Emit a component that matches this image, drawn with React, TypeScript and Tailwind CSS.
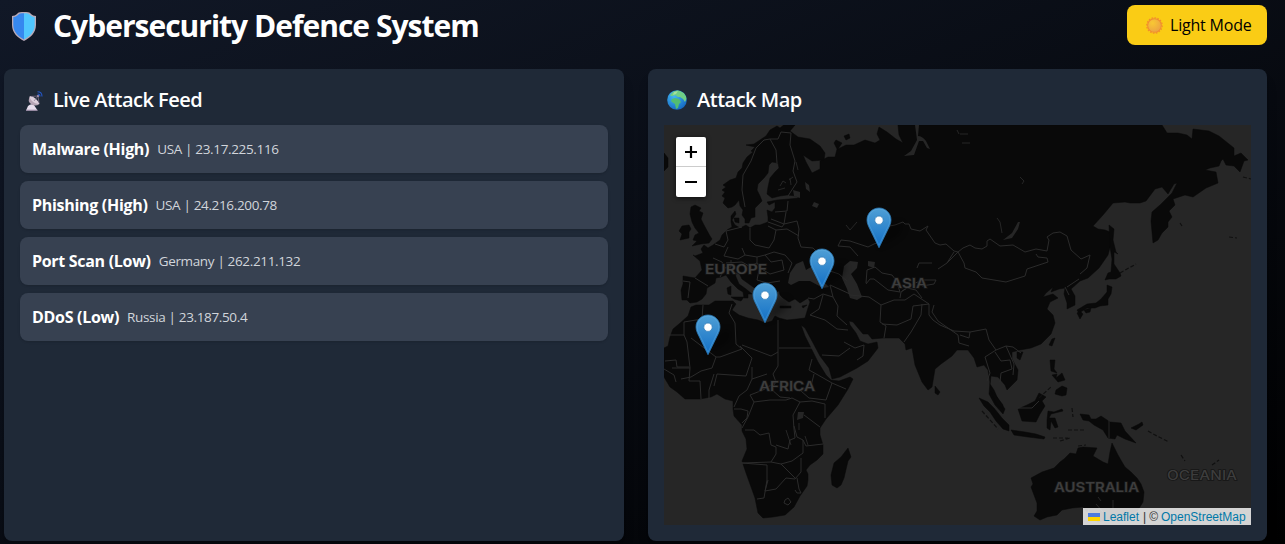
import React from "react";

const attacks = [
  { type: "Malware", level: "High", country: "USA", ip: "23.17.225.116" },
  { type: "Phishing", level: "High", country: "USA", ip: "24.216.200.78" },
  { type: "Port Scan", level: "Low", country: "Germany", ip: "262.211.132" },
  { type: "DDoS", level: "Low", country: "Russia", ip: "23.187.50.4" },
];

const pins = [
  [879, 247],
  [822, 288],
  [765, 322],
  [708, 354],
];

const labels: [string, number, number, number][] = [
  ["EUROPE", 705, 274, 62],
  ["ASIA", 891, 288, 36],
  ["AFRICA", 759, 391, 56],
  ["AUSTRALIA", 1054, 492, 85],
];

function Shield() {
  return (
    <svg className="h-[31px] w-[26px]" viewBox="0 0 26 31">
      <path d="M13 1C10 1 7 1 6 3Q4 5 1 5V14C1 22 7 27 13 30C19 27 25 22 25 14V5Q22 5 20 3C19 1 16 1 13 1Z" fill="#b8aab8" />
      <path d="M13 2.3C10 2.3 8 2.3 7 4Q5 6 2.3 6.3V14C2.3 21 7.5 25.5 13 28.5Z" fill="#3688ef" />
      <path d="M13 2.3C16 2.3 18 2.3 19 4Q21 6 23.7 6.3V14C23.7 21 18.5 25.5 13 28.5Z" fill="#50c7ff" />
    </svg>
  );
}

function Dish() {
  return (
    <svg className="mt-0.5 h-5 w-[18px]" viewBox="0 0 18 20">
      <path d="M1 19.6L3 15Q6 12 9 14L12.5 19.6Z" fill="#e7deed" />
      <path d="M1 18.7H12.5V19.8H1Z" fill="#9b8ba5" />
      <path d="M5 5Q2 10 6 13Q10 16 14.5 13Z" fill="#b5a4b4" />
      <path d="M5 5Q8 5 11 8T14.5 13Q10 13 7 10T5 5Z" fill="#dccfdb" />
      <path d="M5.5 5.5L13 5L14 12M13 5L9 10" fill="none" stroke="#8a7894" strokeWidth=".7" />
      <circle cx="13" cy="5" r="1.1" fill="#a28fae" />
      <path d="M12.5.8Q17 .8 17 5.5M12.5 3Q15 3 15 5.5" fill="none" stroke="#2457c9" strokeWidth="1.1" />
    </svg>
  );
}

function Globe() {
  return (
    <svg className="mt-px h-5 w-5" viewBox="0 0 20 20">
      <defs>
        <radialGradient id="globe" cx=".35" cy=".3" r=".8">
          <stop stopColor="#42b8f4" />
          <stop offset="1" stopColor="#1263bd" />
        </radialGradient>
        <clipPath id="globe-clip"><circle cx="10" cy="10" r="9.8" /></clipPath>
      </defs>
      <circle cx="10" cy="10" r="9.8" fill="url(#globe)" />
      <g clipPath="url(#globe-clip)">
        <path d="M3 5L6 2L11 0L17 3L20 8L18 12L16 9L13 7L11 7L8 5L6 6L4 6Z" fill="#6fce86" />
        <path d="M5 9L8 8L12 9L14 12L12 14L11 18L9 19L8 14L5 12L4 11Z" fill="#52bd72" />
        <path d="M7 2L11 1L9 4L6 5Z" fill="#a5e19a" />
      </g>
    </svg>
  );
}

function Sun() {
  return (
    <svg className="h-[17px] w-[17px]" viewBox="0 0 17 17">
      <defs>
        <radialGradient id="sun" cx=".35" cy=".3" r=".75">
          <stop stopColor="#f8c833" />
          <stop offset="1" stopColor="#eda343" />
        </radialGradient>
      </defs>
      <circle cx="8.5" cy="8.5" r="7.3" fill="#f18b30" />
      <circle cx="8.5" cy="8.5" r="7.7" fill="none" stroke="#f18b30" strokeWidth="1.2" strokeDasharray="1.7 1.3" />
      <circle cx="8.5" cy="8.5" r="6.3" fill="url(#sun)" />
    </svg>
  );
}

function WorldMap() {
  return (
    <svg className="block h-full w-full" viewBox="664 125 587 400">
      <defs>
        <linearGradient id="pin" x1="0" y1="0" x2="0" y2="1">
          <stop stopColor="#4f9fd5" />
          <stop offset="1" stopColor="#126fc6" />
        </linearGradient>
        <filter id="soft" x="-1" y="-1" width="3" height="3"><feGaussianBlur stdDeviation="3" /></filter>
      </defs>
      <rect x="664" y="125" width="587" height="400" fill="#262626" />

      {/* continents */}
      <g fill="#090909" stroke="#090909" strokeWidth=".5" strokeLinejoin="round">
        <path d="M795 125L785 124L780 128L777 126L770 130L766 136L760 140L754 144L746 145L755 147L751 151L753 152L747 157L743 163L742 168L738 172L736 178L730 180L723 185L726 187L722 190L725 192L722 196L725 198L723 203L728 208L732 207L735 205L739 200L740 206L743 210L742 215L745 219V223L749 223L751 218L755 217L755 208L762 201L760 196L757 190L758 184L764 178L768 173L769 165L772 162L778 163L779 168L775 172L770 178L768 187L767 194L772 198L780 196L787 195L796 196L799 198L789 199L777 200L767 202L769 205L775 202L775 208L772 212L767 210L768 217L768 222L760 225L755 225L750 228L746 225L740 228L735 225L732 220L736 214L735 211L731 216L731 222L732 227L727 230L722 235L720 240L713 245L708 248L704 245L701 249L703 253L695 256L693 255L700 261L702 270L695 278L683 276V284L681 290L682 300L687 300L690 303L697 302L702 299L706 294L707 288L715 283L716 278L721 277L726 275L731 282L738 289L743 292L744 298L748 298L748 294L752 294L746 289L739 284L736 277L735 272L739 273L742 279L749 284L756 289L759 298L763 301L765 308L770 305L767 299L772 299L769 294L779 291L780 295L783 298L789 302L795 299L800 303L808 298L810 302L808 308L805 318L797 319L787 320L779 318L775 316L772 321L765 323L758 320L748 318L739 315L732 310L736 304L733 301L724 301L715 301L709 305L703 305L696 305L691 307L688 316L679 324L673 329L670 337L668 346L664 348V377L670 387L677 392L685 399L700 399L711 397L717 394L725 399L733 401L733 409L734 416L742 425L742 431L746 439L747 449L742 461L746 473L755 498L758 513L763 518L773 517L785 515L794 507L800 496L807 486L808 480L808 474L806 470L810 465L817 460L823 454L823 445L820 435L820 428L826 419L838 405L848 389L853 379L850 377L839 381L831 380L826 375L818 362L805 336L801 325L805 328L812 341L820 356L829 368L832 379L840 377L857 368L868 361L878 348L877 342L868 344L860 341L856 333L850 325L849 321L853 322L858 328L863 334L868 334L872 339L883 338L899 338L905 344L906 350L912 348L915 365L922 382L928 390L932 387L935 369L941 364L952 356L957 350L968 350L974 358L977 367L984 365L988 370L990 382L989 394L995 405L1003 414L1005 409L998 399L994 390L990 384L991 376L998 377L1005 385L1007 390L1017 380L1018 370L1012 359L1012 352L1020 350L1031 348L1041 344L1051 334L1055 323L1053 315L1047 309L1050 302L1058 298L1053 294L1043 297L1046 293L1053 287L1051 292L1059 289L1065 288L1064 294L1067 303L1067 309L1075 305L1075 296L1071 289L1080 281L1088 278L1099 268L1108 255L1112 240L1110 232L1105 230L1098 229L1093 226L1103 215L1113 203L1125 202L1130 203L1140 203L1146 201L1155 189L1162 187L1168 194L1174 184L1177 183L1172 193L1160 205L1152 212L1151 221L1153 243L1158 240L1162 233L1168 227L1168 222L1172 217L1169 211L1175 205L1173 199L1185 195L1193 197L1206 188L1218 183L1216 172L1205 170L1210 168L1219 166L1221 161L1223 159L1226 165L1234 166L1240 172L1244 161L1248 160L1241 153L1234 156L1234 148L1219 136L1209 131L1193 129L1192 139L1187 135L1178 133L1167 133L1162 125H898L899 135L903 143L896 139L887 132L879 127L877 134L880 140L875 143L865 140L854 145L846 145L838 149L842 143L836 140L834 143L837 149L835 157L828 157L820 161L820 169L812 173L806 162L803 155L812 161L824 160L825 153L820 146L810 139L798 137L790 131L795 125Z" />
        <path d="M691 207L695 205L701 208L699 211L703 213L701 219L704 225L710 236L712 239L709 243L701 244L692 246L697 241L693 240L695 235L699 233L695 228L692 222L690 214ZM682 226L689 225L691 229L689 232L689 238L680 240L682 234L679 231Z" />
        <path d="M664 153L668 158L668 167L664 171ZM734 218L739 218L739 223L735 222ZM727 288L731 286L731 295L728 294ZM731 297L744 297L741 301L734 299ZM780 306H791V308H780ZM802 306L807 305L803 308ZM844 136L849 134L850 138L846 140Z" />
        <path d="M848 448L851 457L848 461L844 478L841 485L837 488L832 485L831 475L834 463L841 457ZM935 386L940 392L938 395L935 393Z" />
        <path d="M1031 478L1033 484L1031 487L1034 495L1037 503L1037 511L1034 516L1040 520L1047 517L1057 515L1062 510L1072 508L1083 507L1087 512L1089 508L1091 516L1098 522L1109 519L1117 520L1128 518L1138 510L1143 502L1144 492L1141 484L1137 478L1131 472L1125 467L1122 462L1118 455L1115 449L1112 443L1110 452L1108 464L1103 462L1093 456L1097 448L1083 447L1078 448L1076 454L1070 453L1064 459L1060 462L1054 468L1042 472Z" />
        <path d="M979 398L988 402L994 408L1002 418L1009 425L1009 431L1003 429L996 421L990 412L984 406ZM991 391L997 397L1003 405L1003 409L997 405L993 397ZM1011 430L1018 431L1025 432L1036 434L1045 437L1044 439L1028 437L1014 435ZM1018 409L1027 405L1035 401L1039 393L1046 397L1042 401L1045 406L1040 414L1036 422L1022 421ZM1048 411L1054 412L1062 409L1063 411L1051 414L1049 418L1055 418L1058 427L1055 428L1051 421L1050 430L1047 428L1047 420ZM1080 414L1089 415L1091 419L1096 419L1101 416L1110 422L1121 423L1125 431L1136 443L1125 439L1117 435L1115 439L1108 438L1103 430L1094 425L1089 421L1083 420ZM1131 428L1139 424L1142 422L1143 425L1136 430Z" />
        <path d="M1109 225L1114 229L1113 240L1116 252L1118 254L1114 252L1114 264L1120 273L1121 276L1116 279L1109 279L1105 280L1108 273L1111 272L1112 259L1110 247ZM1107 285L1112 287L1111 294L1108 299L1108 305L1100 306L1095 308L1087 308L1079 313L1077 310L1087 304L1096 303L1101 299L1107 292ZM1080 311L1083 314L1080 319L1077 313ZM1084 310L1091 308L1090 312L1086 313ZM1052 339L1055 338L1052 346L1049 345ZM1017 352L1023 352L1020 360L1017 358ZM1050 360L1055 360L1054 369L1057 373L1051 371ZM1052 375L1057 374L1056 378L1062 373L1065 380L1058 382ZM1056 390L1062 386L1067 388L1066 395L1062 396L1055 394Z" />
      </g>
      <g fill="none" stroke="#101010" strokeWidth="1.2" strokeDasharray="4 2">
        <path d="M1120 273L1136 264M1053 438L1068 438M1060 441L1070 438M1068 430L1086 430M1148 431L1157 436L1169 442M1072 408L1073 417M1181 455L1185 461M1212 465L1219 460M1078 446L1086 445M1039 398L1052 386M982 411L998 429M1229 237L1237 238M1243 177L1251 179M1180 223L1182 226" />
      </g>

      {/* inland water */}
      <g fill="#262626">
        <path d="M788 283L790 273L796 264L803 261L806 270L811 267L817 261L821 258L820 270L823 281L829 287L823 288L810 281L799 281L791 285ZM842 278L844 266L850 261L858 262L857 268L851 274L857 284L862 297L857 300L850 298L847 289Z" />
        <path d="M915 125H919L918 136Q922 136 926 141L930 149L927 148L923 141L919 141L914 155L904 156L911 151L917 140ZM868 261L875 262L874 268L868 266ZM793 190L800 192L800 198L794 196ZM805 182L809 185L810 192L806 189ZM814 202L819 204L817 208L812 206ZM798 412L804 412L803 418L797 420ZM1003 240L1012 233L1018 222L1020 222L1018 229L1012 238Z" />
      </g>
      <g fill="none" stroke="#262626" strokeWidth="1">
        <path d="M789 180L793 177M780 186L783 181L786 183M791 185L790 178M778 190L785 188M796 162L798 170M957 130L959 134M960 134H968M962 143H970M1020 177L1024 181L1022 184M997 218L1000 222L1002 233M846 225L850 230L857 222M799 423V430M805 436L808 445M786 430L791 445" />
        <path d="M1096 504L1103 512M1109 420V438M1113 500V508M1098 497L1101 501" />
      </g>

      {/* country borders */}
      <g fill="none" stroke="#2b2b2b" strokeWidth="1" strokeLinejoin="round">
        <path d="M745 207L742 190L743 175L751 161L756 148L764 140L770 139L776 150L777 163M770 139L778 139L781 132L791 133L790 145L795 161L793 171L797 182L788 196M775 212L787 211L788 201M786 212L784 224L771 219M768 222L782 227L784 224L797 221L799 229L798 238L801 247L813 248L824 259M742 227L726 231L728 240L724 247L715 244M750 228L750 240L755 245L769 248L774 240L776 230L768 226M776 230L787 229L799 236M728 247L724 256L738 259L745 255L742 248M745 255L757 257L765 255L774 252L785 255L792 263L788 273M757 257L757 263L749 266L742 262L726 263M765 255L771 262L782 260L784 270L770 274L760 268L757 263M759 270L757 280L767 283L780 281M764 289L774 288" />
        <path d="M683 281L690 282L688 298M695 278L708 286M713 258L722 262L725 268L720 277M731 260L731 267L724 268M808 298L814 299L823 294L833 297L830 285L839 289L850 294M833 297L838 306L837 316L847 325M823 295L819 309L810 315L825 320L837 329L848 330M824 269L839 274L847 281M858 256L850 247L838 246L841 240L850 241L862 245L868 247L874 244L879 242L884 227L895 225L903 222L905 224L909 224L911 229L920 231L928 226L926 230L935 243L940 245L946 244L954 251L958 252L963 248L970 245L975 248L982 249L987 246L987 241L990 239L1000 246L1013 245L1025 252L1036 249L1047 251L1049 240L1047 237L1053 233L1060 232L1067 236L1071 250L1081 259L1090 255L1087 268L1080 274M958 252L947 263M958 252L964 263L965 268L976 272L982 278L1006 282L1025 276L1027 269L1048 262L1047 258L1038 257L1036 254" />
        <path d="M850 295L869 297L881 305L880 322L886 326L884 338M881 305L894 300L905 300L914 294L929 304L929 315L933 320L940 325L954 331L970 332L969 338L960 335M929 304L913 306L911 319L897 325L882 324M866 283L867 270L875 267L882 273L892 275L896 280L900 292L888 290L874 279L870 279L866 284M900 298L901 292L907 288L916 290L922 298M902 291L915 283L924 280L936 280L934 284L922 286M917 268L919 263L932 263M922 304L921 315L911 332L904 342M938 269L947 263L954 252M934 305L932 312L938 321L958 335L959 343L969 346M970 332L986 329L989 340L996 350L1006 346L1013 347L1021 353M996 350L985 357L990 373L987 381M995 352L1001 361L1010 360L1012 369L1001 373L1000 382M1006 346L1014 364L1013 375M1067 287L1079 279M1018 408L1032 408L1039 401M1065 287L1069 295" />
        <path d="M668 335L684 335L687 342L690 368L672 368M684 335L684 322L702 319L703 305M732 304L729 313L735 323L736 344L742 349L720 357L716 357L691 338M742 345L771 356L778 352V320M779 348H812M778 352V366L773 374L776 382L771 389L780 397L790 398M740 346L752 358L746 376L731 375L717 374L714 386M716 357L712 368L701 371L691 377L681 379M664 369L674 375L676 382M690 368L689 381L700 381L701 399M714 374L709 390V399M752 367V379L747 390L739 396L734 407M752 379L767 374M776 382L763 390L750 395L754 402L748 417L742 428" />
        <path d="M665 361L676 360L677 367L689 367M745 430L754 430L760 435L769 433L771 445L776 447V454L771 462L742 463M754 402L770 400L786 400L792 398L800 402L793 415L794 429L795 438L790 440L788 449L776 445M800 402L812 401L825 404L825 418M812 359L809 370L818 375L832 383L846 389M832 383L826 400L809 398L801 391M804 415L820 427M794 426L797 437L803 440V453L792 461L781 464L771 462M803 440L806 446L823 444M742 463L767 465V480L764 498L757 499M768 480L765 491L776 489L786 478L795 479L801 472L801 458M781 464L795 478M797 478L799 489L801 493L797 493L795 490M788 498L791 502L788 505L784 503L785 500ZM734 409H741L748 411L747 418L742 423M799 391L811 386L814 374M822 355L839 356L850 348M844 342L855 348L864 345L863 356L857 360" />
      </g>

      {/* continent names */}
      <g fill="#3d3d3d" stroke="#151515" strokeWidth="1.4" paintOrder="stroke" fontFamily="Inter, sans-serif" fontSize="12.8" fontWeight="600">
        {labels.map(([name, x, y, width]) => (
          <text key={name} x={x} y={y} textLength={width} lengthAdjust="spacingAndGlyphs">{name}</text>
        ))}
        <text x="1167" y="480" textLength="70" lengthAdjust="spacingAndGlyphs" fontWeight="500">OCEANIA</text>
      </g>

      {/* attack markers */}
      {pins.map(([x, y]) => (
        <g key={x} transform={`translate(${x - 12.5} ${y - 39.5})`}>
          <path d="M12 39L25 18Q36 12 36 21Q35 29 12 39Z" fill="#000" opacity=".35" filter="url(#soft)" />
          <path d="M12.5.5C5.8.5.5 5.9.5 12.4C.5 15.8 2 18.8 3.4 21.5L12.5 40.2L21.6 21.5C23 18.8 24.5 15.8 24.5 12.4C24.5 5.9 19.2.5 12.5.5Z" fill="url(#pin)" stroke="#2c78b4" strokeWidth=".8" />
          <path d="M12.5 1.6C6.5 1.6 1.6 6.5 1.6 12.4C1.6 15.6 3 18.4 4.4 21.1L12.5 37.8L20.6 21.1C22 18.4 23.4 15.6 23.4 12.4C23.4 6.5 18.5 1.6 12.5 1.6Z" fill="none" stroke="#69b4e5" strokeOpacity=".35" />
          <circle cx="12.5" cy="12.7" r="4.2" fill="white" stroke="#347eb7" strokeWidth=".8" />
        </g>
      ))}
    </svg>
  );
}

export default function App() {
  return (
    <div className="h-[544px] overflow-hidden bg-linear-to-br/srgb from-[#111827] to-black pt-[5px] pr-[18px] pl-1 font-['Open_Sans','Noto_Sans',sans-serif] text-white">
      <header className="mb-6 flex h-10 items-center justify-between">
        <h1 className="flex items-center gap-4 pt-0.5 pl-[7px] text-[30px] leading-9 font-bold">
          <Shield />
          <span className="-mt-px tracking-[-1px] whitespace-nowrap">Cybersecurity Defence System</span>
        </h1>
        <button className="flex h-10 w-[140px] items-center gap-[7px] rounded-lg bg-[#facc15] pl-[19px] text-base text-black">
          <Sun />
          <span className="tracking-[-0.2px] whitespace-nowrap">Light Mode</span>
        </button>
      </header>

      <main className="grid grid-cols-[620px_619px] gap-6">
        <section className="h-[472px] rounded-lg bg-[#1f2937] p-4 shadow-lg">
          <h2 className="mb-3 flex h-7 items-center gap-[10px] pt-px pl-[5px] text-[20px] font-semibold">
            <Dish />
            <span className="tracking-[-0.5px] whitespace-nowrap">Live Attack Feed</span>
          </h2>
          <ul className="flex flex-col gap-2">
            {attacks.map((a) => (
              <li key={a.ip} className="flex h-12 items-center gap-2 rounded-lg bg-[#374151] px-3 whitespace-nowrap shadow">
                <strong className="text-base font-bold tracking-[-0.3px]">{a.type} ({a.level})</strong>
                <span className="pt-px text-[13.5px] tracking-[-0.35px] text-[#d1d5db]">{a.country} | {a.ip}</span>
              </li>
            ))}
          </ul>
        </section>

        <section className="h-[472px] rounded-lg bg-[#1f2937] p-4 shadow-lg">
          <h2 className="mb-3 flex h-7 items-center gap-[10px] pt-px pl-[3px] text-[20px] font-semibold">
            <Globe />
            <span className="tracking-[-0.5px] whitespace-nowrap">Attack Map</span>
          </h2>
          <div className="relative h-[400px] w-[587px] overflow-hidden">
            <WorldMap />
            <div className="absolute top-3 left-3 flex w-[30px] flex-col rounded-[2px] bg-white text-black shadow-[0_1px_5px_rgba(0,0,0,0.65)]">
              <button aria-label="Zoom in" className="flex h-[30px] items-center justify-center border-b border-[#ccc]">
                <svg className="h-3 w-3" viewBox="0 0 12 12"><path d="M0 6H12M6 0V12" stroke="black" strokeWidth="2.2" /></svg>
              </button>
              <button aria-label="Zoom out" className="flex h-[30px] items-center justify-center">
                <svg className="h-3 w-3" viewBox="0 0 12 12"><path d="M0 6H12" stroke="black" strokeWidth="2" /></svg>
              </button>
            </div>
            <div className="absolute right-0 bottom-0 flex h-[17px] w-[168px] items-center bg-white/80 pl-[5px] font-['Liberation_Sans',sans-serif] text-xs whitespace-nowrap text-[#333]">
              <svg className="mr-[3px] h-2 w-3" viewBox="0 0 12 8"><path d="M0 0H12V4H0Z" fill="#4c7be1" /><path d="M0 4H12V8H0Z" fill="#ffd500" /></svg>
              <span className="text-[#0078a8]">Leaflet</span>
              <span className="mr-[3px] ml-1">|</span>
              <span className="mr-[3px]">©</span>
              <span className="text-[#0078a8]">OpenStreetMap</span>
            </div>
          </div>
        </section>
      </main>
    </div>
  );
}
